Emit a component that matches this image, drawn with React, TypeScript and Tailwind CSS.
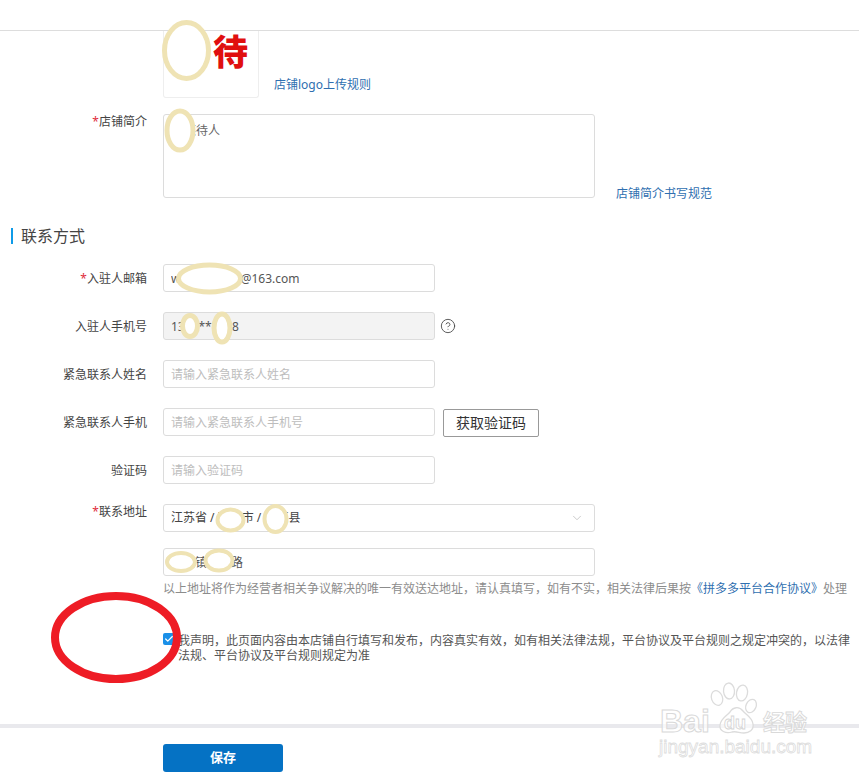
import { ChevronDown, CircleHelp, Check } from 'lucide-react';
import type { ReactNode } from 'react';

const inputCls =
  'h-7 w-[272px] rounded-[3px] border border-[#dcdcdc] pr-2 pl-[7px] text-xs text-[#555] outline-none placeholder:text-[#bdbdbd]';

function Row({ label, required, children, top }: { label: string; required?: boolean; children: ReactNode; top?: boolean }) {
  return (
    <div className={`flex gap-4 ${top ? 'items-start' : 'items-center'}`}>
      <label className={`w-[147px] shrink-0 text-right text-xs text-[#444] ${top ? '' : 'pt-[2px]'}`}>
        {required && <span className="text-[#e02e3c]">*</span>}
        {label}
      </label>
      {children}
    </div>
  );
}

// hand drawn marks that were put on top of the screenshot
const masks = [
  { cx: 186.5, cy: 50.5, rx: 22, ry: 28, w: 5 },
  { cx: 180, cy: 130.5, rx: 13, ry: 19.5, w: 5 },
  { cx: 209.5, cy: 278.5, rx: 31, ry: 13.5, w: 5 },
  { cx: 190, cy: 326, rx: 7.5, ry: 10.5, w: 5 },
  { cx: 222, cy: 328, rx: 8, ry: 14, w: 5 },
  { cx: 230.5, cy: 520, rx: 13, ry: 10.5, w: 4 },
  { cx: 275.5, cy: 519, rx: 11, ry: 13, w: 4 },
  { cx: 181, cy: 562, rx: 14, ry: 9, w: 4 },
  { cx: 219, cy: 560.5, rx: 13.5, ry: 10, w: 4 },
];

export default function App() {
  return (
    <div className="relative h-[777px] w-[859px] overflow-hidden bg-white font-['Noto_Sans','Noto_Sans_CJK_SC',sans-serif]">
      <div className="h-[31px] border-b border-[#dddddd]" />

      {/* 店铺 logo */}
      <div className="flex items-end gap-[15px] pl-[163px]">
        <div className="flex h-[67px] w-[96px] items-start justify-end rounded-b-[3px] border-x border-b border-[#eeeeee] pr-[10px]">
          <span className="font-['Noto_Sans_CJK_SC',sans-serif] text-[35px] leading-[38px] font-black text-[#e00f0f]">待</span>
        </div>
        <a className="pb-[5px] text-xs text-[#2f6fb0]">店铺logo上传规则</a>
      </div>

      {/* 店铺简介 */}
      <div className="mt-4">
        <Row label="店铺简介" required top>
          <div className="flex items-end gap-[21px]">
            <textarea
              readOnly
              value="某某待人"
              className="h-[84px] w-[432px] resize-none rounded-[3px] border border-[#dcdcdc] px-2 py-2 text-xs text-[#666] outline-none"
            />
            <a className="-mb-1 text-xs text-[#2f6fb0]">店铺简介书写规范</a>
          </div>
        </Row>
      </div>

      <h2 className="mt-[30px] ml-[11px] border-l-2 border-[#0f9be8] pl-2 text-base leading-4 text-[#444]">联系方式</h2>

      <div className="mt-5 flex flex-col gap-5">
        <Row label="入驻人邮箱" required>
          <input readOnly value="wxxxxxxxxxi@163.com" className={inputCls} />
        </Row>
        <Row label="入驻人手机号">
          <div className="flex items-center gap-[5px]">
            <input readOnly value="1335***628" className={`${inputCls} bg-[#f3f3f3]`} />
            <CircleHelp className="h-4 w-4 text-[#444]" strokeWidth={1.3} />
          </div>
        </Row>
        <Row label="紧急联系人姓名">
          <input placeholder="请输入紧急联系人姓名" className={inputCls} />
        </Row>
        <Row label="紧急联系人手机">
          <div className="flex items-center gap-2">
            <input placeholder="请输入紧急联系人手机号" className={inputCls} />
            <button className="h-7 w-[96px] translate-y-px rounded-[2px] border border-[#999] text-sm text-[#333]">获取验证码</button>
          </div>
        </Row>
        <Row label="验证码">
          <input placeholder="请输入验证码" className={inputCls} />
        </Row>
        <Row label="联系地址" required top>
          <div className="flex h-7 w-[432px] items-center justify-between rounded-[3px] border border-[#dcdcdc] pr-2 pl-[7px] text-xs text-[#444]">
            <span>江苏省 / 某某市 / 某某县</span>
            <ChevronDown className="mr-[2px] h-[14px] w-[14px] text-[#b5b5b5]" strokeWidth={1.2} />
          </div>
        </Row>
      </div>

      <div className="mt-4 pl-[163px]">
        <input readOnly value="某某镇某某路" className={`${inputCls} w-[432px] text-[#444]`} />
        <p className="mt-px text-xs leading-6 whitespace-nowrap text-[#8c8c8c]">
          以上地址将作为经营者相关争议解决的唯一有效送达地址，请认真填写，如有不实，相关法律后果按
          <a className="text-[#2f6fb0]">《拼多多平台合作协议》</a>
          处理
        </p>
        <div className="mt-[32px] flex w-[690px] gap-[3px]">
          <span className="flex h-3 w-3 shrink-0 items-center justify-center rounded-[2px] bg-[#1a90e8]">
            <Check className="h-[10px] w-[10px] text-white" strokeWidth={3} />
          </span>
          <p className="text-xs leading-[15px] text-[#555]">
            我声明，此页面内容由本店铺自行填写和发布，内容真实有效，如有相关法律法规，平台协议及平台规则之规定冲突的，以法律法规、平台协议及平台规则规定为准
          </p>
        </div>
      </div>

      <div className="mt-[61px] h-[4px] bg-[#e9e9ed]" />
      <div className="mt-4 pl-[163px]">
        <button className="h-7 w-[120px] rounded-[3px] bg-[#0572c4] text-[13px] font-bold text-white">保存</button>
      </div>

      {/* marks and watermark lying over the page */}
      <svg className="pointer-events-none absolute inset-0" width="859" height="777">
        {masks.map((m, i) => (
          <ellipse key={i} cx={m.cx} cy={m.cy} rx={m.rx} ry={m.ry} fill="#fff" stroke="#efe3b4" strokeWidth={m.w} />
        ))}
        <ellipse cx="116" cy="637.5" rx="61" ry="41.5" fill="none" stroke="#ee1c25" strokeWidth="8" />
        <g fill="#fff" fillOpacity="0.6" stroke="#dcdcdc" strokeWidth="1.3">
          <ellipse cx="717" cy="698" rx="5.5" ry="7.5" transform="rotate(-20 717 698)" />
          <ellipse cx="729" cy="691" rx="5.5" ry="8" transform="rotate(-5 729 691)" />
          <ellipse cx="742" cy="693" rx="5.5" ry="8" transform="rotate(10 742 693)" />
          <ellipse cx="751" cy="706" rx="5" ry="7" transform="rotate(25 751 706)" />
          <path d="M720 725c1-7 7-9 10-13 3-5 9-6 13-1 3 4 9 6 10 13 1 6-4 9-9 9-5 0-7-2-12-1-6 2-13-1-12-7z" />
        </g>
        <text x="660" y="732" fontFamily="'Liberation Sans',sans-serif" fontSize="32" fontWeight="700" fill="#fff" fillOpacity="0.7" stroke="#d9d9d9" strokeWidth="1">Bai</text>
        <text x="724" y="729" fontFamily="'Liberation Sans',sans-serif" fontSize="18" fontWeight="700" fill="#fff" stroke="#d5d5d5" strokeWidth="0.8">du</text>
        <text x="763" y="730" fontFamily="'Noto Sans CJK SC',sans-serif" fontSize="22" fontWeight="700" fill="#fff" fillOpacity="0.7" stroke="#d9d9d9" strokeWidth="0.9">经验</text>
        <text x="659" y="753" fontFamily="'Liberation Sans',sans-serif" fontSize="19" fill="#fff" stroke="#dddddd" strokeWidth="0.8">jingyan.baidu.com</text>
      </svg>
    </div>
  );
}
